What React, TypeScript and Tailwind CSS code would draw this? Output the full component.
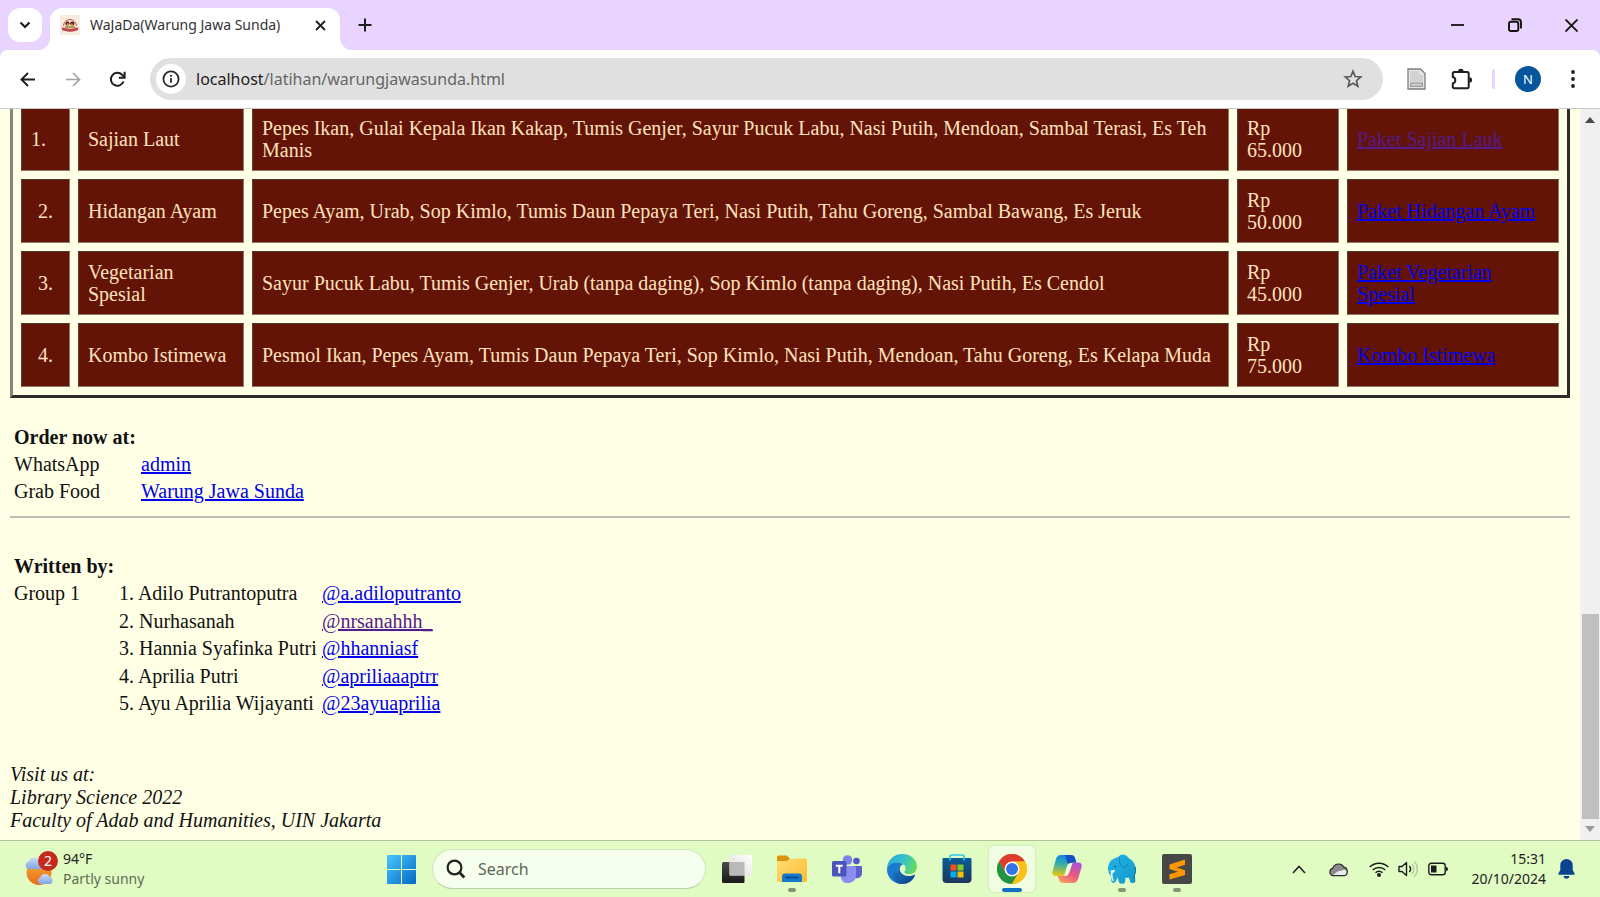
import type { ReactNode } from "react";

type Menu = { no: string; name: string; items: string; price: string; link: string; visited?: boolean };

const menus: Menu[] = [
  {
    no: "1.",
    name: "Sajian Laut",
    items:
      "Pepes Ikan, Gulai Kepala Ikan Kakap, Tumis Genjer, Sayur Pucuk Labu, Nasi Putih, Mendoan, Sambal Terasi, Es Teh Manis",
    price: "65.000",
    link: "Paket Sajian Lauk",
    visited: true,
  },
  {
    no: "2.",
    name: "Hidangan Ayam",
    items: "Pepes Ayam, Urab, Sop Kimlo, Tumis Daun Pepaya Teri, Nasi Putih, Tahu Goreng, Sambal Bawang, Es Jeruk",
    price: "50.000",
    link: "Paket Hidangan Ayam",
  },
  {
    no: "3.",
    name: "Vegetarian Spesial",
    items: "Sayur Pucuk Labu, Tumis Genjer, Urab (tanpa daging), Sop Kimlo (tanpa daging), Nasi Putih, Es Cendol",
    price: "45.000",
    link: "Paket Vegetarian Spesial",
  },
  {
    no: "4.",
    name: "Kombo Istimewa",
    items:
      "Pesmol Ikan, Pepes Ayam, Tumis Daun Pepaya Teri, Sop Kimlo, Nasi Putih, Mendoan, Tahu Goreng, Es Kelapa Muda",
    price: "75.000",
    link: "Kombo Istimewa",
  },
];

const authors = [
  { name: "1. Adilo Putrantoputra", handle: "@a.adiloputranto" },
  { name: "2. Nurhasanah", handle: "@nrsanahhh_", visited: true },
  { name: "3. Hannia Syafinka Putri", handle: "@hhanniasf" },
  { name: "4. Aprilia Putri", handle: "@apriliaaaptrr" },
  { name: "5. Ayu Aprilia Wijayanti", handle: "@23ayuaprilia" },
];

function PageLink({ visited, children }: { visited?: boolean; children: ReactNode }) {
  return (
    <a href="#" className={visited ? "text-[#551a8b] underline" : "text-[#0000ee] underline"}>
      {children}
    </a>
  );
}

function IconButton({ label, className, children }: { label: string; className: string; children: ReactNode }) {
  return (
    <button type="button" aria-label={label} className={`flex shrink-0 items-center justify-center ${className}`}>
      {children}
    </button>
  );
}

function Favicon() {
  return (
    <svg width="20" height="20" viewBox="0 0 20 20" className="shrink-0">
      <rect width="20" height="20" fill="#f8ece0" />
      <path d="M3.5 11a6.4 6.4 0 0 1 13 0" fill="#f6d9c4" stroke="#b5605a" strokeWidth="1" />
      <circle cx="7.5" cy="8.5" r="2.1" fill="#5a2020" />
      <circle cx="12.3" cy="8.5" r="2.1" fill="#3c1c1c" />
      <circle cx="7.9" cy="9.2" r="1" fill="#e3b23c" />
      <circle cx="12" cy="9.2" r="1" fill="#d98a2b" />
      <path d="M5 11h10v2.4H5z" fill="#b59a52" />
      <path d="M1.5 12.500l3 .3q5.500 2.500 11 0l3-.3-1 3-2 .2q-5.500 2-11 0l-2-.2z" fill="#c2444c" />
    </svg>
  );
}

function TabStrip() {
  return (
    <div className="flex h-[50px] shrink-0 items-end pl-2">
      <div className="flex h-[42px] items-start">
        <IconButton label="Search tabs" className="size-[34px] rounded-xl bg-white">
          <svg width="12" height="8" viewBox="0 0 12 8" fill="none" stroke="#1f1f1f" strokeWidth="2.2">
            <path d="M1.5 1.5 6 6l4.500-4.500" />
          </svg>
        </IconButton>
      </div>
      <div className="relative ml-2 flex h-[42px] w-[290px] items-center rounded-t-xl bg-white pr-3 pl-[10px] pb-2">
        <svg className="absolute bottom-0 -left-3" width="12" height="12" viewBox="0 0 12 12">
          <path d="M12 0v12H0A12 12 0 0 0 12 0z" fill="#fff" />
        </svg>
        <svg className="absolute -right-3 bottom-0" width="12" height="12" viewBox="0 0 12 12">
          <path d="M0 0v12h12A12 12 0 0 1 0 0z" fill="#fff" />
        </svg>
        <Favicon />
        <span className="ml-[10px] flex-1 truncate text-[14px] leading-5 text-[#333]">WaJaDa(Warung Jawa Sunda)</span>
        <IconButton label="Close tab" className="size-4">
          <svg width="11" height="11" viewBox="0 0 11 11" fill="none" stroke="#1f1f1f" strokeWidth="1.800">
            <path d="M1 1l9 9M10 1l-9 9" />
          </svg>
        </IconButton>
      </div>
      <div className="flex h-[42px] flex-1 items-center justify-between pb-2">
        <IconButton label="New tab" className="ml-[10px] size-[30px]">
          <svg width="14" height="14" viewBox="0 0 14 14" fill="none" stroke="#1f1f1f" strokeWidth="2">
            <path d="M7 .5v13M.5 7h13" />
          </svg>
        </IconButton>
        <div className="flex">
          <IconButton label="Minimize" className="h-8 w-[57px]">
            <svg width="13" height="13" viewBox="0 0 13 13" stroke="#111" strokeWidth="1.800">
              <path d="M0 6h13" />
            </svg>
          </IconButton>
          <IconButton label="Restore" className="h-8 w-[57px]">
            <svg width="14" height="14" viewBox="0 0 14 14" fill="none" stroke="#111" strokeWidth="1.900">
              <rect x="1" y="3.700" width="9.300" height="9.300" rx="1.800" />
              <path d="M3.500 1.200h6.500a3 3 0 0 1 3 3v6.300" />
            </svg>
          </IconButton>
          <IconButton label="Close" className="h-8 w-[57px]">
            <svg width="13" height="13" viewBox="0 0 13 13" fill="none" stroke="#111" strokeWidth="1.800">
              <path d="M.5.5l12 12M12.500.5l-12 12" />
            </svg>
          </IconButton>
        </div>
      </div>
    </div>
  );
}

function Toolbar() {
  return (
    <div className="flex h-[59px] shrink-0 items-center rounded-t-lg border-b border-[#c9c9c9] bg-white px-[11px]">
      <IconButton label="Back" className="size-8">
        <svg width="15" height="15" viewBox="0 0 15 15" fill="none" stroke="#1f1f1f" strokeWidth="1.900">
          <path d="M15 7.500H1.500M8 1 1.500 7.500 8 14" />
        </svg>
      </IconButton>
      <IconButton label="Forward" className="ml-[14px] size-8">
        <svg width="15" height="15" viewBox="0 0 15 15" fill="none" stroke="#a3a3a3" strokeWidth="1.700">
          <path d="M0 7.500h13.500M7 1l6.500 6.500L7 14" />
        </svg>
      </IconButton>
      <IconButton label="Reload" className="ml-3 size-8">
        <svg width="17" height="17" viewBox="0 0 17 17" fill="none" stroke="#1f1f1f" strokeWidth="2">
          <path d="M14.500 10.500a6.500 6.500 0 1 1-1.400-6.700L15.300 6" />
          <path d="M15.600.8v6H9.800" />
        </svg>
      </IconButton>
      <div className="ml-[17px] flex h-[42px] flex-1 items-center rounded-full bg-[#e0e0e0] pr-4 pl-[6px]">
        <IconButton label="View site information" className="size-[30px] rounded-full bg-white">
          <svg width="18" height="18" viewBox="0 0 18 18" fill="none" stroke="#2b2b2b" strokeWidth="1.800">
            <circle cx="9" cy="9" r="7.600" />
            <path d="M9 8v4.800M9 5v1.700" />
          </svg>
        </IconButton>
        <div className="relative ml-[10px] h-7 flex-1 text-[16px] leading-7">
          <input
            aria-label="Address"
            defaultValue="localhost/latihan/warungjawasunda.html"
            className="absolute inset-0 w-full bg-transparent text-transparent outline-none"
          />
          <span aria-hidden="true" className="pointer-events-none text-[#666]">
            <span className="text-[#222]">localhost</span>/latihan/warungjawasunda.html
          </span>
        </div>
        <IconButton label="Bookmark this tab" className="size-7">
          <svg width="20" height="20" viewBox="0 0 20 20" fill="none" stroke="#5a5a5a" strokeWidth="1.700">
            <path d="M10 2.300l2.200 5.200 5.600.5-4.300 3.700 1.300 5.500L10 14.300l-4.800 2.900 1.300-5.500L2.200 8l5.600-.5z" />
          </svg>
        </IconButton>
      </div>
      <IconButton label="Extension" className="ml-[17px] size-8">
        <svg width="19" height="22" viewBox="0 0 19 22">
          <path d="M1 1h12.500L18 5.500V21H1z" fill="#e6e6e6" stroke="#7d7d7d" strokeWidth="1.300" />
          <path d="M3 3h9.500v4H16v7H3z" fill="#d2d2d2" />
          <path d="M3.500 15h12v3.500h-12z" fill="#c9c9c9" stroke="#8c8c8c" strokeWidth=".9" />
        </svg>
      </IconButton>
      <IconButton label="Extensions" className="ml-[14px] size-8">
        <svg width="22" height="22" viewBox="0 0 22 22">
          <path
            d="M3 4h13.500a1.200 1.200 0 0 1 1.200 1.200V19a1.200 1.200 0 0 1-1.200 1.200H3A1.200 1.200 0 0 1 1.800 19v-3.600a3.300 3.300 0 0 0 0-6.400V5.200A1.200 1.200 0 0 1 3 4z"
            fill="none"
            stroke="#1f1f1f"
            strokeWidth="2"
          />
          <path d="M7 3.500a2.800 2.800 0 0 1 5.600 0zM18.300 9.200a2.800 2.800 0 0 1 0 5.600z" fill="#1f1f1f" />
        </svg>
      </IconButton>
      <div className="ml-[14px] h-5 w-[3px] rounded-full bg-[#e6d5fc]" />
      <IconButton label="Profile" className="ml-5 size-[26px] rounded-full bg-[#05569d] text-[13px] leading-4 text-white">
        N
      </IconButton>
      <IconButton label="Menu" className="ml-4 size-8">
        <svg width="4" height="18" viewBox="0 0 4 18" fill="#1f1f1f">
          <circle cx="2" cy="2" r="1.900" />
          <circle cx="2" cy="9" r="1.900" />
          <circle cx="2" cy="16" r="1.900" />
        </svg>
      </IconButton>
    </div>
  );
}

function MenuTable() {
  const cell =
    "border border-t-[#4b3a30] border-l-[#5a4036] border-r-[#8b7c6c] border-b-[#8b7c6c] bg-[#631407] p-[9px] align-middle";
  return (
    <table className="-mt-[10px] w-full table-fixed border-separate border-spacing-2 border-x-[3px] border-b-[3px] border-l-[#858580] border-r-[#2b2c28] border-b-[#2b2c28] text-[#ffe2bd]">
      <colgroup>
        <col className="w-[49px]" />
        <col className="w-[166px]" />
        <col />
        <col className="w-[102px]" />
        <col className="w-[212px]" />
      </colgroup>
      <tbody>
        {menus.map((m) => (
          <tr key={m.no}>
            <td className={`${cell} ${m.visited ? "text-left" : "text-center"}`}>{m.no}</td>
            <td className={cell}>{m.name}</td>
            <td className={cell}>{m.items}</td>
            <td className={cell}>
              Rp
              <br />
              {m.price}
            </td>
            <td className={cell}>
              <PageLink visited={m.visited}>{m.link}</PageLink>
            </td>
          </tr>
        ))}
      </tbody>
    </table>
  );
}

function Page() {
  return (
    <main className="min-w-0 flex-1 overflow-hidden px-[10px] font-['Liberation_Serif',serif] text-[20px] leading-[22px] text-[#111]">
      <MenuTable />
      <table className="mt-[25px] ml-[4px] h-[82px]">
        <tbody>
          <tr>
            <th colSpan={2} className="text-left font-bold">
              Order now at:
            </th>
          </tr>
          <tr>
            <td className="w-[127px]">WhatsApp</td>
            <td>
              <PageLink>admin</PageLink>
            </td>
          </tr>
          <tr>
            <td>Grab Food</td>
            <td>
              <PageLink>Warung Jawa Sunda</PageLink>
            </td>
          </tr>
        </tbody>
      </table>
      <hr className="mt-[11px] border-t-2 border-[#bcbcb4]" />
      <table className="mt-[34px] ml-[4px] h-[165px]">
        <tbody>
          <tr>
            <th colSpan={3} className="text-left font-bold">
              Written by:
            </th>
          </tr>
          {authors.map((a, i) => (
            <tr key={a.handle}>
              <td className="w-[105px]">{i === 0 ? "Group 1" : ""}</td>
              <td className="w-[203px] whitespace-nowrap">{a.name}</td>
              <td>
                <PageLink visited={a.visited}>{a.handle}</PageLink>
              </td>
            </tr>
          ))}
        </tbody>
      </table>
      <address className="mt-[46px] leading-[23px] italic">
        Visit us at:
        <br />
        Library Science 2022
        <br />
        Faculty of Adab and Humanities, UIN Jakarta
      </address>
    </main>
  );
}

function Scrollbar() {
  return (
    <div className="flex w-5 shrink-0 flex-col items-center bg-[#f0f0f0] py-2">
      <svg width="10" height="6" viewBox="0 0 10 6" className="shrink-0">
        <path d="M0 6 5 0l5 6z" fill="#4a4a4a" />
      </svg>
      <div className="flex-1" />
      <div className="h-[205px] w-[17px] bg-[#c0c0c0]" />
      <svg width="10" height="6" viewBox="0 0 10 6" className="mt-[7px] shrink-0">
        <path d="M0 0h10L5 6z" fill="#9a9a9a" />
      </svg>
    </div>
  );
}

function WeatherIcon() {
  return (
    <svg width="34" height="36" viewBox="0 0 34 36" className="shrink-0">
      <defs>
        <linearGradient id="sun" x1="0" y1="0" x2="0" y2="1">
          <stop offset="0" stopColor="#f3b13b" />
          <stop offset="1" stopColor="#e86a17" />
        </linearGradient>
        <linearGradient id="cloud" x1="0" y1="0" x2="0" y2="1">
          <stop offset="0" stopColor="#c6dafa" />
          <stop offset="1" stopColor="#83a4e4" />
        </linearGradient>
      </defs>
      <circle cx="15" cy="21.500" r="12.500" fill="url(#sun)" />
      <path d="M4 18a4 4 0 0 1 .4-7.500 6 6 0 0 1 11-.5 4 4 0 0 1 .6 8z" fill="url(#cloud)" />
      <path d="M16 33a3.500 3.500 0 0 1 .2-6.500 5.200 5.200 0 0 1 9.600-.4 3.600 3.600 0 0 1 .4 6.900z" fill="url(#cloud)" />
      <circle cx="24" cy="10" r="10" fill="#c42b1c" />
      <text x="24" y="15" textAnchor="middle" fill="#fff" fontSize="14">
        2
      </text>
    </svg>
  );
}

function StartIcon() {
  return (
    <svg width="29" height="29" viewBox="0 0 29 29">
      <defs>
        <linearGradient id="win" x1="0" y1="0" x2="1" y2="1">
          <stop offset="0" stopColor="#48c8fb" />
          <stop offset="1" stopColor="#0568c8" />
        </linearGradient>
      </defs>
      <path
        d="M1 0h13v14H0V1a1 1 0 0 1 1-1zM15 0h13a1 1 0 0 1 1 1v13H15zM0 15h14v14H1a1 1 0 0 1-1-1zM15 15h14v13a1 1 0 0 1-1 1H15z"
        fill="url(#win)"
      />
    </svg>
  );
}

function TaskViewIcon() {
  return (
    <svg width="30" height="28" viewBox="0 0 30 28">
      <defs>
        <linearGradient id="tvd" x1="0" y1="0" x2="0" y2="1">
          <stop offset="0" stopColor="#4a4a4a" />
          <stop offset="1" stopColor="#191919" />
        </linearGradient>
        <linearGradient id="tvl" x1="1" y1="0" x2="0" y2="1">
          <stop offset="0" stopColor="#fff" />
          <stop offset="1" stopColor="#d9d9d9" />
        </linearGradient>
      </defs>
      <rect x="0" y="7" width="22.500" height="21" rx="1.500" fill="url(#tvd)" />
      <rect x="7.500" y="0" width="22.500" height="20.500" rx="1.500" fill="url(#tvl)" />
      <rect x="7.500" y="7" width="15" height="13.500" fill="#b9b9b9" />
    </svg>
  );
}

function FolderIcon() {
  return (
    <svg width="30" height="28" viewBox="0 0 30 28">
      <defs>
        <linearGradient id="fold" x1="0" y1="0" x2="1" y2="1">
          <stop offset="0" stopColor="#ffdc72" />
          <stop offset="1" stopColor="#f9bd33" />
        </linearGradient>
      </defs>
      <path d="M0 2q0-1.500 1.500-1.500h8.500l3 3.500H28q2 0 2 2v8H0z" fill="#d9930d" />
      <path d="M0 6h10l3-2.500h15.500Q30 3.500 30 5v20.500q0 1.500-1.500 1.500h-27Q0 27 0 25.500z" fill="url(#fold)" />
      <path d="M5 27v-5.500q0-3 3-3h14q3 0 3 3V27z" fill="#1479cd" />
      <path d="M9 22.500h12" stroke="#0b4d91" strokeWidth="1.800" strokeLinecap="round" />
    </svg>
  );
}

function TeamsIcon() {
  return (
    <svg width="30" height="28" viewBox="0 0 30 28">
      <circle cx="24.500" cy="6" r="3.300" fill="#5059c9" />
      <path d="M20 11h9q1 0 1 1v7a5.500 5.500 0 0 1-9 3z" fill="#5b62ce" />
      <circle cx="15.500" cy="5" r="4.800" fill="#7b83eb" />
      <path d="M9 11h13.500q1.500 0 1.500 1.500V20a8 8 0 0 1-15 4z" fill="#8a8ff0" />
      <rect x="0" y="6" width="14.500" height="15.500" rx="1.500" fill="#4b53bc" />
      <path d="M3.800 9.800h7v1.900H8.300v6.600h-2v-6.600H3.800z" fill="#fff" />
    </svg>
  );
}

function EdgeIcon() {
  return (
    <svg width="30" height="30" viewBox="0 0 30 30">
      <defs>
        <linearGradient id="edgeTop" x1="0" y1=".3" x2="1" y2=".6">
          <stop offset="0" stopColor="#2aa7dc" />
          <stop offset=".5" stopColor="#35c1c9" />
          <stop offset="1" stopColor="#67dc56" />
        </linearGradient>
        <linearGradient id="edgeLow" x1="0" y1="0" x2="1" y2="1">
          <stop offset="0" stopColor="#1d7fcb" />
          <stop offset="1" stopColor="#0c3f86" />
        </linearGradient>
      </defs>
      <path
        d="M0 15.500C0 6 7 0 15 0c9.500 0 15 6.500 15 12.500 0 5-3.700 7.800-7.700 7.800-3.500 0-4.900-1.300-4.900-2.300 0-.8 1.300-1.400 1.300-3.600 0-3-3-5.700-7.200-5.700C6 8.700 2 11 0 15.500z"
        fill="url(#edgeTop)"
      />
      <path
        d="M0 15.500C.8 11 5.500 8.200 11 8.400c2.500.1 4.500 1 5.800 2.300-3.500-.5-6.600 2.300-6.600 6.400 0 5.800 5.500 9 11 7.900 2.200-.4 4.200-1.300 5.600-2.200C25 27 20.500 30 15 30 6.500 30 0 23.500 0 15.500z"
        fill="#1b78cf"
      />
      <path
        d="M10.200 17c0-3.700 2.500-6.300 5.500-6.500-1.800.9-2.900 2.500-2.900 4.500 0 4 4 7 8.500 7 2.500 0 4.500-.5 6-1.300.5-.2 1 .3.700.8C26 26.500 21 30 15 30c-1.500 0-3-.3-4.200-.7C7.500 27 5.500 23.500 6 19z"
        fill="url(#edgeLow)"
      />
    </svg>
  );
}

function StoreIcon() {
  return (
    <svg width="30" height="30" viewBox="0 0 30 30">
      <defs>
        <linearGradient id="bag" x1="0" y1="0" x2="0" y2="1">
          <stop offset="0" stopColor="#0b5c96" />
          <stop offset="1" stopColor="#1d365c" />
        </linearGradient>
      </defs>
      <path d="M.5 5q0-1 1-1h27q1 0 1 1v20q0 4-4 4h-21q-4 0-4-4z" fill="url(#bag)" />
      <path d="M8 6.500V2.500Q8 1 9.500 1h11Q22 1 22 2.500v4" fill="none" stroke="#2bc6e8" strokeWidth="1.600" />
      <rect x="8.500" y="10.500" width="6" height="6" fill="#f1511b" />
      <rect x="15.500" y="10.500" width="6" height="6" fill="#80cc28" />
      <rect x="8.500" y="17.500" width="6" height="6" fill="#00adef" />
      <rect x="15.500" y="17.500" width="6" height="6" fill="#fbbc09" />
    </svg>
  );
}

function ChromeIcon() {
  return (
    <svg width="30" height="30" viewBox="0 0 30 30">
      <circle cx="15" cy="15" r="15" fill="#fbc116" />
      <path d="M2 7.500A15 15 0 0 1 28 7.500H15L8.500 18.750z" fill="#dd3b2c" />
      <path d="M2 7.500A15 15 0 0 0 15 30L21.500 18.750 8.500 18.750z" fill="#229342" />
      <path d="M28 7.500H15L21.500 18.750 15 30A15 15 0 0 0 28 7.500z" fill="#fbc116" />
      <circle cx="15" cy="15" r="7.500" fill="#fff" />
      <circle cx="15" cy="15" r="6" fill="#3574e8" />
    </svg>
  );
}

function CopilotIcon() {
  return (
    <svg width="30" height="28" viewBox="0 0 30 28">
      <defs>
        <linearGradient id="coL" x1=".3" y1="0" x2=".2" y2="1">
          <stop offset="0" stopColor="#1188ee" />
          <stop offset=".45" stopColor="#3bb0a0" />
          <stop offset="1" stopColor="#f2c60d" />
        </linearGradient>
        <linearGradient id="coR" x1=".8" y1="0" x2=".3" y2="1">
          <stop offset="0" stopColor="#a857dd" />
          <stop offset=".55" stopColor="#e8577f" />
          <stop offset="1" stopColor="#fb9b60" />
        </linearGradient>
      </defs>
      <path d="M21 28H11q-3 0-4-3l-1.200-4H10q2.500 0 3.300-2.500L16 10q.9-2.500 3.500-2.500H26q4.500 0 3.600 4.500L26 24q-1.200 4-5 4z" fill="url(#coR)" />
      <path d="M9 0h10q3 0 4 3l1.200 4.500h-4q-2.500 0-3.300 2.500L14 18.500q-.9 2.500-3.500 2.500H4Q-.5 21 .4 16.500L4 4Q5.200 0 9 0z" fill="url(#coL)" />
      <path d="M13 0h6q3 0 4 3l1.200 4.500h-4q-2.500 0-3.300 2.500L15.500 8z" fill="#1b4fc4" />
      <path d="M12.500 19.500 15 11q.8-2.500 3-3h2.500L17.500 17q-.8 3-3.500 4h-3q1-.2 1.500-1.500z" fill="#edfcd8" />
    </svg>
  );
}

function ElephantIcon() {
  return (
    <svg width="30" height="30" viewBox="0 0 30 30">
      <defs>
        <linearGradient id="eleph" x1="0" y1="0" x2="1" y2="1">
          <stop offset="0" stopColor="#22b3e6" />
          <stop offset="1" stopColor="#1598cb" />
        </linearGradient>
      </defs>
      <path
        d="M11 3Q14-.2 17.500.8q3 .8 4 3.200 6 3 7 9.500.8 4-1 8l.5 6.500q-.3 1-3 1-1.500 0-1.800-1l-1.200-4.500q-2 .5-3.500 0l-.5 5q-.5 1.200-3 1.200T12 28.500L10.500 23l-1 3q-1 3-3 3Q4 28.500 4 25l-.2-3Q.5 18 1 13.500 2 5 11 3z"
        fill="url(#eleph)"
      />
      <path d="M12.500 3.500q-1.500 5.500 3 9.500 4 .5 5.500-3.500" fill="none" stroke="#1287b6" strokeWidth="1" />
      <path d="M3.500 16.500l4.500-.8q-.2 3-2.700 3.800l.7 5q.3 2 1.500 2.500-3 .5-3.200-3z" fill="#effbf6" />
      <path d="M28.300 13q1 4.500-.9 8.500l.4 6" fill="none" stroke="#0f6d96" strokeWidth="1" />
      <circle cx="8" cy="12.500" r=".8" fill="#0b4c6b" />
    </svg>
  );
}

function SublimeIcon() {
  return (
    <svg width="30" height="30" viewBox="0 0 30 30">
      <rect width="30" height="30" rx="2" fill="#474747" />
      <path d="M7.500 10.500 23 5.500v5.200l-8.500 2.700 8.500 2.800v4.700L7.500 25.500v-5.200l8.500-2.600-8.500-2.800z" fill="#ff9800" />
    </svg>
  );
}

const apps: { label: string; icon: ReactNode; state?: "open" | "active" }[] = [
  { label: "Task View", icon: <TaskViewIcon /> },
  { label: "File Explorer", icon: <FolderIcon />, state: "open" },
  { label: "Microsoft Teams", icon: <TeamsIcon /> },
  { label: "Microsoft Edge", icon: <EdgeIcon /> },
  { label: "Microsoft Store", icon: <StoreIcon /> },
  { label: "Google Chrome", icon: <ChromeIcon />, state: "active" },
  { label: "Copilot", icon: <CopilotIcon /> },
  { label: "Laragon", icon: <ElephantIcon />, state: "open" },
  { label: "Sublime Text", icon: <SublimeIcon />, state: "open" },
];

function Tray() {
  return (
    <div className="flex flex-1 items-center justify-end pr-[26px] text-[#222]">
      <IconButton label="Show hidden icons" className="w-5">
        <svg width="14" height="9" viewBox="0 0 14 9" fill="none" stroke="#222" strokeWidth="1.600">
          <path d="M1 8l6-6.500L13 8" />
        </svg>
      </IconButton>
      <IconButton label="OneDrive" className="ml-5 w-5">
        <svg width="21" height="15" viewBox="0 0 21 15">
          <path
            d="M4.500 14A3.900 3.900 0 0 1 4 6.300 6.300 6.300 0 0 1 15.600 5a4.700 4.700 0 0 1 .6 9z"
            fill="#8b8b8b"
            stroke="#2a2a2a"
            strokeWidth="1.200"
          />
          <path d="M4.500 13.300q5-5 8.500-4.500 3-2 5 .2.900 3.500-2 4.300z" fill="#ececec" />
        </svg>
      </IconButton>
      <button type="button" aria-label="Network, volume and battery" className="ml-5 flex items-center gap-[9px]">
        <svg width="20" height="16" viewBox="0 0 20 16" fill="none" stroke="#1c1c1c" strokeWidth="1.500">
          <path d="M.7 6a13.200 13.200 0 0 1 18.600 0M3.700 9a9 9 0 0 1 12.600 0M6.500 11.800a5 5 0 0 1 7 0" />
          <circle cx="10" cy="14" r="1.200" fill="#1c1c1c" />
        </svg>
        <svg width="21" height="18" viewBox="0 0 21 18" fill="none" stroke="#1c1c1c" strokeWidth="1.400">
          <path d="M1 6.500h3L8.500 2.500v13L4 11.500H1z" strokeLinejoin="round" />
          <path d="M11.300 6a4.500 4.500 0 0 1 0 6" />
          <path d="M13.700 3.700a7.500 7.500 0 0 1 0 10.600M16.300 1.500a10.700 10.700 0 0 1 0 15" stroke="#b4cb9c" />
        </svg>
        <svg width="20" height="14" viewBox="0 0 20 14">
          <rect x=".8" y="1.300" width="16.400" height="11.400" rx="2.500" fill="none" stroke="#1c1c1c" strokeWidth="1.400" />
          <rect x="3" y="3.500" width="5.500" height="7" fill="#1c1c1c" />
          <path d="M18 4.800q2 .4 2 2.200t-2 2.200z" fill="#1c1c1c" />
        </svg>
      </button>
      <div className="ml-6 text-right text-[14px] leading-5">
        <div>15:31</div>
        <div>20/10/2024</div>
      </div>
      <IconButton label="Notifications" className="ml-[12px] w-4">
        <svg width="17" height="20" viewBox="0 0 17 20" className="shrink-0" fill="#0b4291">
          <path d="M8.500 0a6.200 6.200 0 0 1 6.200 6.200V11l2 3.700q.3 1-.7 1H1q-1 0-.7-1L2.300 11V6.200A6.200 6.200 0 0 1 8.500 0zM5.700 17h5.600a2.800 2.800 0 0 1-5.600 0z" />
        </svg>
      </IconButton>
    </div>
  );
}

function Taskbar() {
  return (
    <footer className="flex h-[57px] shrink-0 items-center border-t border-[#b4c29b] bg-[#e0fcc3]">
      <div className="flex flex-1 items-center gap-[5px] pl-6 text-[14px] leading-5">
        <WeatherIcon />
        <div>
          <div className="text-[#222]">94°F</div>
          <div className="text-[#5f6d54]">Partly sunny</div>
        </div>
      </div>
      <div className="mr-5 flex items-center">
        <IconButton label="Start" className="size-[46px]">
          <StartIcon />
        </IconButton>
        <label className="mx-2 flex h-10 w-[274px] items-center rounded-full border border-[#cfe5b8] border-b-[#bcd0a6] bg-[#f6feed] pl-[13px]">
          <svg
            width="20"
            height="20"
            viewBox="0 0 20 20"
            fill="none"
            stroke="#222"
            strokeWidth="2.200"
            className="shrink-0"
          >
            <circle cx="8.500" cy="8.500" r="6.900" />
            <path d="M13.300 13.300 18.300 18.500" strokeWidth="2.800" />
          </svg>
          <input
            aria-label="Search"
            placeholder="Search"
            className="ml-3 w-40 bg-transparent text-[16px] leading-6 outline-none placeholder:text-[#5f665a]"
          />
        </label>
        <div className="flex gap-[9px]">
          {apps.map((app) => (
            <button
              key={app.label}
              type="button"
              aria-label={app.label}
              className={`relative flex size-[46px] items-center justify-center rounded-[5px] ${
                app.state === "active" ? "bg-[#f0fde2] shadow-[0_0_2px_#b9cda4]" : ""
              }`}
            >
              {app.icon}
              {app.state === "active" && (
                <span className="absolute bottom-0 left-[13px] h-1 w-5 rounded-full bg-[#0f6fc5]" />
              )}
              {app.state === "open" && (
                <span className="absolute bottom-0 left-[19px] h-1 w-2 rounded-full bg-[#869671]" />
              )}
            </button>
          ))}
        </div>
      </div>
      <Tray />
    </footer>
  );
}

export default function App() {
  return (
    <div className="flex h-screen flex-col overflow-hidden bg-[#e8d4ff] font-['Noto_Sans',sans-serif]">
      <TabStrip />
      <Toolbar />
      <div className="flex min-h-0 flex-1 bg-[#ffffe5]">
        <Page />
        <Scrollbar />
      </div>
      <Taskbar />
    </div>
  );
}
